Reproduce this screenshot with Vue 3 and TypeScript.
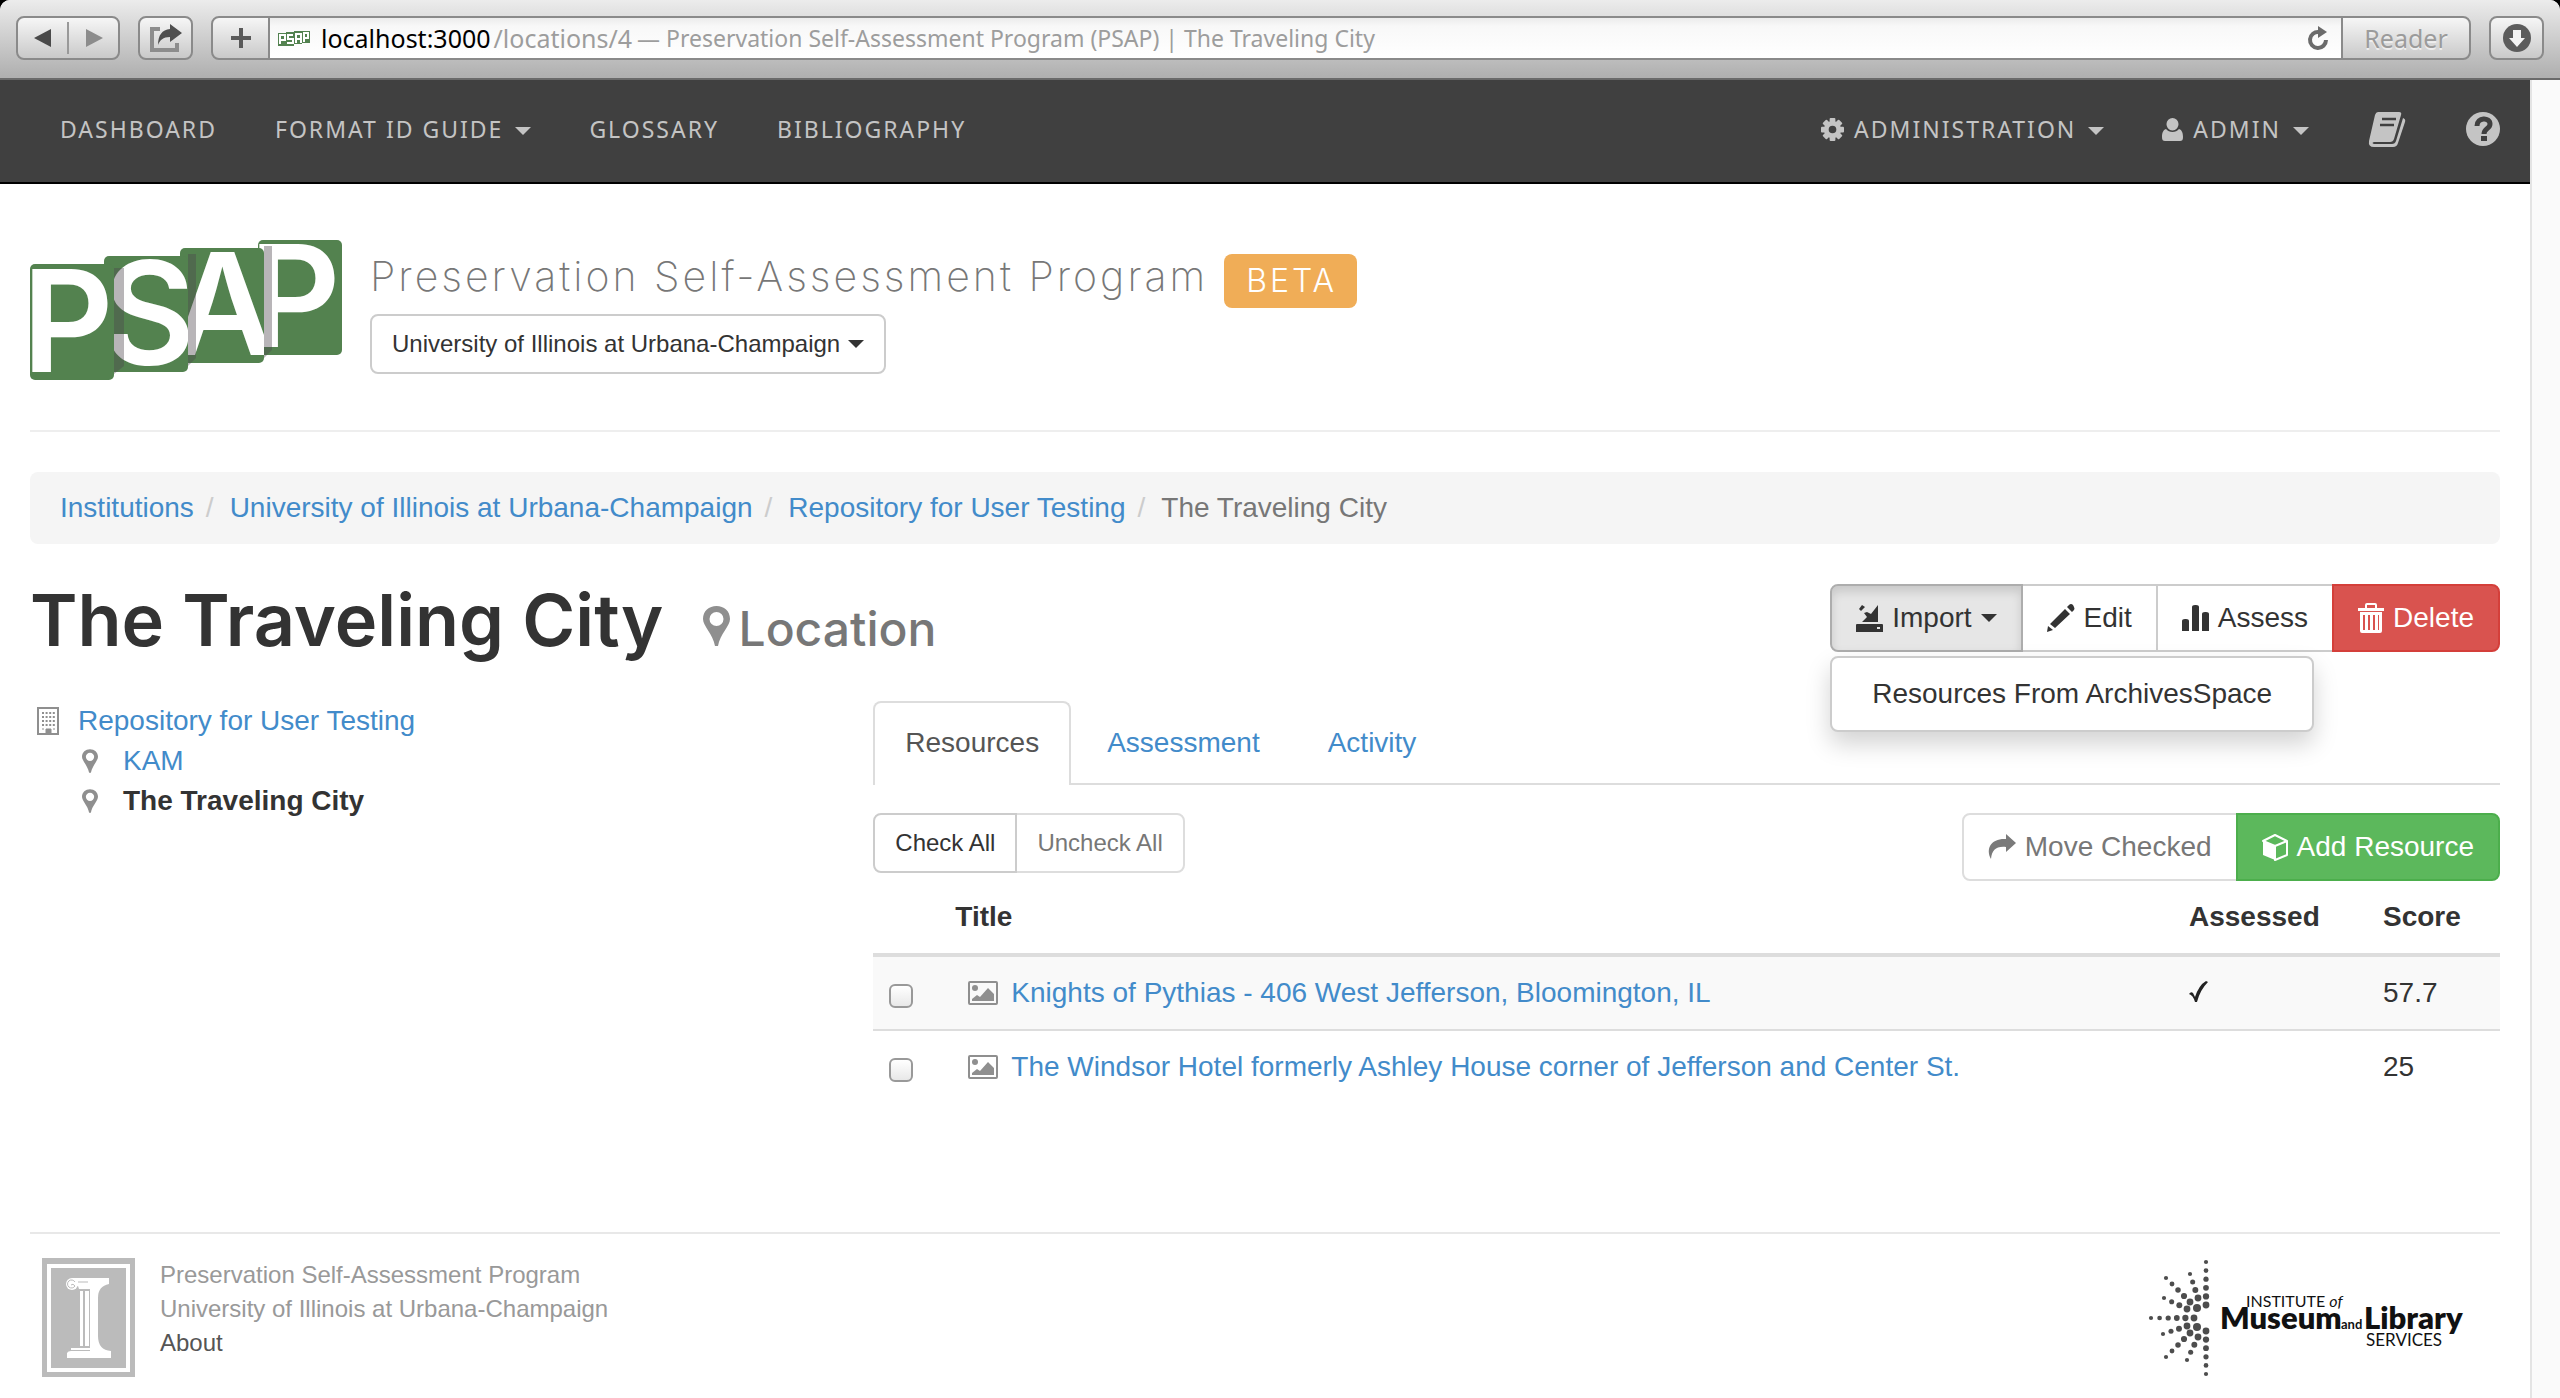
<script setup lang="ts">
interface Crumb { label: string; current?: boolean }
interface Resource { id: number; title: string; assessed: boolean; score: string }
interface Dot { x: number; y: number; r: number }

const crumbs: Crumb[] = [
  { label: 'Institutions' },
  { label: 'University of Illinois at Urbana-Champaign' },
  { label: 'Repository for User Testing' },
  { label: 'The Traveling City', current: true },
]

const resources: Resource[] = [
  { id: 1, title: 'Knights of Pythias - 406 West Jefferson, Bloomington, IL', assessed: true, score: '57.7' },
  { id: 2, title: 'The Windsor Hotel formerly Ashley House corner of Jefferson and Center St.', assessed: false, score: '25' },
]

const teeth: number[] = [0, 45, 90, 135, 180, 225, 270, 315]

// Each ray runs from its outermost dot to its innermost one.
const rays: [number, number, number, number, number][] = [
  [58, 4, 58, 47, 6],
  [42, 16, 50, 40, 4],
  [18, 20, 42, 44, 5],
  [16, 40, 39, 51, 4],
  [3, 60, 46, 60, 6],
  [15, 76, 39, 68, 4],
  [18, 99, 42, 75, 5],
  [39, 102, 50, 79, 4],
  [58, 116, 58, 73, 6],
]
const dots: Dot[] = rays.flatMap(([x1, y1, x2, y2, n]) =>
  Array.from({ length: n }, (_, i) => {
    const t = i / (n - 1)
    return { x: x1 + (x2 - x1) * t, y: y1 + (y2 - y1) * t, r: 2.1 + 1.3 * t }
  }),
).concat([{ x: 49, y: 50, r: 4 }, { x: 49, y: 69, r: 4 }])
</script>

<template>
  <div class="window">
    <header class="toolbar">
      <div class="chrome-group">
        <button class="chrome-btn nav-back" aria-label="Back">
          <svg width="18" height="18" viewBox="0 0 18 18"><path d="M17 0v18L0 9z" fill="#4a4a4a" /></svg>
        </button>
        <span class="chrome-sep"></span>
        <button class="chrome-btn nav-forward" aria-label="Forward">
          <svg width="18" height="18" viewBox="0 0 18 18"><path d="M1 0v18l17-9z" fill="#8c8c8c" /></svg>
        </button>
      </div>
      <button class="chrome-box share" aria-label="Share">
        <svg width="34" height="30" viewBox="0 0 34 30">
          <path d="M11 6H3v21h25v-7" fill="none" stroke="#8d8d8d" stroke-width="4" />
          <path d="M21 1l12 9-12 9v-5c-7 0-10 3-12 8 0-10 4-15 12-16z" fill="#4f4f4f" />
        </svg>
      </button>
      <div class="address">
        <button class="chrome-plus" aria-label="Add bookmark">
          <svg width="20" height="20" viewBox="0 0 20 20"><path d="M8 0h4v8h8v4h-8v8H8v-8H0V8h8z" fill="#5a5a5a" /></svg>
        </button>
        <div class="url">
          <svg class="favicon" width="32" height="15" viewBox="0 0 32 15">
            <path d="M0 2h8V1h8V0h16v12h-8v1h-8v2H0z" fill="#538250" />
            <path d="M2 13V4h5v5H3M15 4h-5v4h5v4h-6M18 12V3h5v9M18 8h5M26 11V2h4v5h-4" fill="none" stroke="#fff" stroke-width="2" />
          </svg>
          <span class="host">localhost:3000</span>
          <span class="path">/locations/4</span>
          <span class="page-title">— Preservation Self-Assessment Program (PSAP) | The Traveling City</span>
          <button class="reload" aria-label="Reload">
            <svg width="22" height="24" viewBox="0 0 22 24">
              <path d="M12 6a8 8 0 1 0 7 8" fill="none" stroke="#6b6b6b" stroke-width="4" />
              <path d="M11 0l9 6-9 6z" fill="#6b6b6b" />
            </svg>
          </button>
        </div>
        <button class="reader">Reader</button>
      </div>
      <button class="chrome-box downloads" aria-label="Downloads">
        <svg width="28" height="28" viewBox="0 0 28 28">
          <circle cx="14" cy="14" r="14" fill="#5c5c5c" />
          <path d="M10 6h8v8h4l-8 9-8-9h4z" fill="#f4f4f4" />
        </svg>
      </button>
    </header>

    <div class="viewport">
      <div class="page">
        <nav class="navbar">
          <a href="#">DASHBOARD</a>
          <a href="#">FORMAT ID GUIDE<i class="caret"></i></a>
          <a href="#">GLOSSARY</a>
          <a href="#">BIBLIOGRAPHY</a>
          <a href="#" class="push">
            <svg class="lead" width="23" height="23" viewBox="0 0 24 24" fill="#c4c4c4">
              <path fill-rule="evenodd" d="M12 3a9 9 0 1 0 0 18 9 9 0 0 0 0-18zm0 5a4 4 0 1 1 0 8 4 4 0 0 1 0-8z" />
              <rect v-for="t in teeth" :key="t" x="9" y="0" width="6" height="6" rx="1" :transform="`rotate(${t} 12 12)`" />
            </svg>ADMINISTRATION<i class="caret"></i>
          </a>
          <a href="#">
            <svg class="lead" width="21" height="23" viewBox="0 0 21 23" fill="#c4c4c4">
              <path d="M10.500 0a6 6 0 0 1 6 6c0 3-2.500 6.500-6 6.500S4.500 9 4.500 6a6 6 0 0 1 6-6z" />
              <path d="M4 11c3 4 10 4 13 0 3 1 4 4 4 8 0 3-1 4-3 4H3c-2 0-3-1-3-4 0-4 1-7 4-8z" />
            </svg>ADMIN<i class="caret"></i>
          </a>
          <a href="#" class="icon-link" aria-label="Glossary book">
            <svg width="37" height="36" viewBox="0 0 37 36">
              <path d="M9 1h21q3 0 2 3l-7 24q-1 3-4 3H5q-3 1 0 2h18q3 0 4-3l7-23q3 1 2 4l-7 21q-1 4-5 4H5q-6 0-5-6L6 4q1-3 3-3z" fill="#c4c4c4" />
              <path d="M13 8h14M11 14h14" stroke="#404040" stroke-width="2.500" />
            </svg>
          </a>
          <a href="#" class="icon-link" aria-label="Help">
            <svg width="34" height="34" viewBox="0 0 34 34">
              <circle cx="17" cy="17" r="17" fill="#c4c4c4" />
              <path d="M11 14c0-9 13-9 13-2 0 5-6 4-6 10" fill="none" stroke="#404040" stroke-width="5" />
              <rect x="15" y="24" width="6" height="5" fill="#404040" />
            </svg>
          </a>
        </nav>

        <div class="masthead">
          <svg class="logo" width="312" height="140" viewBox="0 0 312 140" role="img" aria-label="PSAP">
            <defs>
              <clipPath id="card-1"><rect x="0" y="24" width="84" height="116" rx="5" /></clipPath>
              <clipPath id="card-2"><rect x="74" y="16" width="84" height="116" rx="5" /></clipPath>
              <clipPath id="card-3"><rect x="150" y="8" width="84" height="115" rx="5" /></clipPath>
              <clipPath id="card-4"><rect x="228" y="0" width="84" height="115" rx="5" /></clipPath>
            </defs>
            <g clip-path="url(#card-4)">
              <rect x="228" y="0" width="84" height="115" fill="#53824f" />
              <text x="219" y="107" class="logo-letter">P</text>
            </g>
            <path d="M234 6h8v104l-8 8z" fill="#4d454d" fill-opacity=".4" />
            <g clip-path="url(#card-3)">
              <rect x="150" y="8" width="84" height="115" fill="#53824f" />
              <text x="193" y="115" text-anchor="middle" class="logo-letter">A</text>
            </g>
            <path d="M158 14h8v104l-8 8z" fill="#4d454d" fill-opacity=".4" />
            <g clip-path="url(#card-2)">
              <rect x="74" y="16" width="84" height="116" fill="#53824f" />
              <text x="119" y="124" text-anchor="middle" class="logo-letter">S</text>
            </g>
            <path d="M84 28h10v98l-10 8z" fill="#4d454d" fill-opacity=".4" />
            <g clip-path="url(#card-1)">
              <rect x="0" y="24" width="84" height="116" fill="#53824f" />
              <text x="-8" y="132" class="logo-letter">P</text>
            </g>
          </svg>
          <div class="brand">
            <div class="brand-line">
              <span class="brand-name">Preservation Self-Assessment Program</span>
              <span class="beta">BETA</span>
            </div>
            <button class="btn btn-small institution">University of Illinois at Urbana-Champaign<i class="caret"></i></button>
          </div>
        </div>

        <hr class="rule" />

        <ol class="breadcrumb">
          <li v-for="c in crumbs" :key="c.label">
            <span v-if="c.current">{{ c.label }}</span>
            <a v-else href="#">{{ c.label }}</a>
          </li>
        </ol>

        <div class="heading">
          <h1>The Traveling City
            <small><svg width="27" height="40" viewBox="0 0 27 40"><path fill-rule="evenodd" d="M13.500 0C21 0 27 5 27 13c0 7-10 15-12 27h-3C10 28 0 20 0 13 0 5 6 0 13.500 0zm0 6a7 7 0 1 0 0 14 7 7 0 0 0 0-14z" fill="#8f8f8f" /></svg>Location</small>
          </h1>
          <div class="actions">
            <div class="btn-group">
              <button class="btn active" aria-expanded="true">
                <svg width="27" height="28" viewBox="0 0 27 28" fill="#333">
                  <path d="M1 20h25q1 0 1 1v7H0v-7q0-1 1-1zM22 1v17H6l5-5-3-4 3-1 4 2zM3 5l3-4 3 2-4 4z" />
                  <rect x="21" y="23" width="3" height="2" fill="#e6e6e6" />
                </svg>Import<i class="caret"></i>
              </button>
              <button class="btn">
                <svg width="28" height="28" viewBox="0 0 28 28" fill="#333"><path d="M22 1q2-2 4 0l1 2q1 2 0 3l-2 2-5-5zM18 5l5 5L8 24l-5-4zM1 22l5 4-6 2z" /></svg>Edit
              </button>
              <button class="btn">
                <svg width="27" height="26" viewBox="0 0 27 26" fill="#333"><path d="M0 26V16q0-2 3-2h1q3 0 3 2v10zM10 26V2q0-2 3-2h1q3 0 3 2v24zM20 26V9q0-2 3-2h1q3 0 3 2v17z" /></svg>Assess
              </button>
              <button class="btn danger">
                <svg class="bin" width="26" height="30" viewBox="0 0 26 30" fill="#fff">
                  <path fill-rule="evenodd" d="M0 5h7V2q0-2 2-2h8q2 0 2 2v3h7v3H0zM9 5h8V2H9z" />
                  <path fill-rule="evenodd" d="M2 9h22v19q0 2-2 2H4q-2 0-2-2zM5 12v15h2V12zm5 0v15h2V12zm5 0v15h2V12zm5 0v15h1V12z" />
                </svg>Delete
              </button>
            </div>
            <ul class="menu"><li><a href="#">Resources From ArchivesSpace</a></li></ul>
          </div>
        </div>

        <div class="columns">
          <aside class="tree">
            <div class="node">
              <svg class="building" width="22" height="28" viewBox="0 0 22 28">
                <path d="M1 1h20v26H1z" fill="none" stroke="#8f8f8f" stroke-width="2" />
                <path d="M5 6h13M5 10h13M5 14h13M5 18h13" stroke="#8f8f8f" stroke-width="2" stroke-dasharray="2 1.600" />
                <path d="M5 22h2M16 22h2M9 22h5v5H9z" stroke="#8f8f8f" stroke-width="1" fill="#8f8f8f" />
              </svg>
              <a href="#">Repository for User Testing</a>
            </div>
            <div class="node child">
              <svg width="16" height="24" viewBox="0 0 27 40"><path fill-rule="evenodd" d="M13.500 0C21 0 27 5 27 13c0 7-10 15-12 27h-3C10 28 0 20 0 13 0 5 6 0 13.500 0zm0 6a7 7 0 1 0 0 14 7 7 0 0 0 0-14z" fill="#8f8f8f" /></svg>
              <a href="#">KAM</a>
            </div>
            <div class="node child">
              <svg width="16" height="24" viewBox="0 0 27 40"><path fill-rule="evenodd" d="M13.500 0C21 0 27 5 27 13c0 7-10 15-12 27h-3C10 28 0 20 0 13 0 5 6 0 13.500 0zm0 6a7 7 0 1 0 0 14 7 7 0 0 0 0-14z" fill="#8f8f8f" /></svg>
              <strong>The Traveling City</strong>
            </div>
          </aside>

          <main class="content">
            <div class="tabs">
              <a href="#" class="tab current">Resources</a>
              <a href="#" class="tab">Assessment</a>
              <a href="#" class="tab">Activity</a>
            </div>
            <div class="controls">
              <div class="btn-group">
                <button class="btn btn-small">Check All</button>
                <button class="btn btn-small" disabled>Uncheck All</button>
              </div>
              <div class="btn-group">
                <button class="btn" disabled>
                  <svg width="28" height="26" viewBox="0 0 28 26"><path d="M18 0l10 9-10 9v-5C8 12 4 16 3 25 -3 14 4 4 18 5z" fill="#7a7a7a" /></svg>Move Checked
                </button>
                <button class="btn success">
                  <svg width="26" height="27" viewBox="0 0 26 27">
                    <path d="M1 7l12 5v14L1 21z" fill="#fff" />
                    <path d="M13 1l12 6v14l-12 5V12L1 7zM13 12l12-5" fill="none" stroke="#fff" stroke-width="2" stroke-linejoin="round" />
                  </svg>Add Resource
                </button>
              </div>
            </div>
            <table>
              <colgroup><col class="c-check" /><col /><col class="c-assessed" /><col class="c-score" /></colgroup>
              <thead>
                <tr><th></th><th>Title</th><th>Assessed</th><th>Score</th></tr>
              </thead>
              <tbody>
                <tr v-for="r in resources" :key="r.id">
                  <td><input type="checkbox" :aria-label="r.title" /></td>
                  <td>
                    <div class="title-cell">
                      <svg width="30" height="24" viewBox="0 0 30 24">
                        <rect x="1" y="1" width="28" height="22" rx="1" fill="none" stroke="#8f8f8f" stroke-width="2" />
                        <circle cx="7" cy="7" r="3" fill="#8f8f8f" />
                        <path d="M4 20v-2l5-4 3 2 8-9 6 6v7z" fill="#8f8f8f" />
                      </svg>
                      <a href="#">{{ r.title }}</a>
                    </div>
                  </td>
                  <td>
                    <svg v-if="r.assessed" width="19" height="22" viewBox="0 0 19 22" aria-label="Yes"><path d="M0 13q2-3 4-1l2 4Q10 4 17 0l2 1Q11 9 8 21H6Q4 14 0 13z" fill="#222" /></svg>
                  </td>
                  <td>{{ r.score }}</td>
                </tr>
              </tbody>
            </table>
          </main>
        </div>

        <footer class="footer">
          <svg width="93" height="119" viewBox="0 0 93 119" role="img" aria-label="University of Illinois">
            <rect width="93" height="119" fill="#bbb" />
            <rect x="7" y="8" width="79" height="104" fill="none" stroke="#fff" stroke-width="4" />
            <path d="M30 20H67v6q-11 2-11 14v38q0 14 13 15v7H25v-5q1-2 4-2h19V31H37l-1-3h-6z" fill="#fff" />
            <path d="M38 33h3v55h-3zM43 33h4v55h-4zM29 90h19v2H29z" fill="#fff" />
            <circle cx="30" cy="26" r="6" fill="#fff" />
            <path d="M36 24h10M33 24a4 4 0 1 0 0 4q-2-3-4-1" stroke="#bbb" stroke-width="1" fill="none" />
          </svg>
          <div class="footer-text">
            <span>Preservation Self-Assessment Program</span>
            <span>University of Illinois at Urbana-Champaign</span>
            <a href="#">About</a>
          </div>
          <svg class="imls" width="316" height="119" viewBox="0 0 316 119" role="img" aria-label="Institute of Museum and Library Services">
            <circle v-for="(d, i) in dots" :key="i" :cx="d.x" :cy="d.y" :r="d.r" fill="#4d4d4d" />
            <text x="98" y="49" font-size="16">INSTITUTE <tspan font-style="italic">of</tspan></text>
            <text x="72" y="71" font-size="31" font-weight="800">Museum</text>
            <text x="193" y="71" font-size="13" font-weight="700">and</text>
            <text x="216" y="71" font-size="31" font-weight="800">Library</text>
            <text x="218" y="88" font-size="17">SERVICES</text>
          </svg>
        </footer>
      </div>
      <div class="scrollbar"></div>
    </div>
  </div>
</template>

<style>
html, body { margin: 0; background: #000; }
</style>

<style scoped>
* { box-sizing: border-box; }
.window {
  min-height: 100vh; display: flex; flex-direction: column; background: #fff;
  font-family: "Liberation Sans", Arial, sans-serif; font-size: 28px; line-height: 40px; color: #333;
  border-radius: 10px 10px 0 0; overflow: hidden;
}
a { color: #428bca; text-decoration: none; }
button { font: inherit; color: inherit; margin: 0; padding: 0; border: 0; background: none; }
svg { flex: none; display: block; overflow: visible; }
.caret { display: inline-block; border: 8px solid transparent; border-top-color: currentColor; border-bottom: 0; }

.toolbar {
  height: 80px; display: flex; align-items: flex-start; padding: 16px 16px 0; gap: 18px;
  background: linear-gradient(#ececec, #dcdcdc 20px, #b0b0b0 76px); border-bottom: 2px solid #6a6a6a;
}
.chrome-group, .chrome-box, .chrome-plus, .reader {
  height: 44px; border: 2px solid #8a8a8a; border-radius: 8px; background: linear-gradient(#f6f6f6, #c9c9c9);
}
.chrome-group { width: 104px; display: flex; align-items: center; }
.chrome-btn { flex: 1; display: flex; justify-content: center; }
.chrome-sep { width: 2px; height: 32px; background: #999; }
.chrome-box { width: 55px; display: flex; align-items: center; justify-content: center; }
.address { flex: 1; display: flex; }
.chrome-plus { width: 59px; display: flex; align-items: center; justify-content: center; border-radius: 8px 0 0 8px; }
.url {
  flex: 1; height: 44px; display: flex; align-items: center; padding: 0 12px 0 8px; white-space: nowrap;
  border: solid #8a8a8a; border-width: 2px 0; background: linear-gradient(#ececec, #f8f8f8 8px, #fff);
  font-family: "Noto Sans", sans-serif; font-size: 25px; color: #9d9d9d;
}
.host { margin-left: 11px; color: #000; }
.path { margin-left: 3px; }
.page-title { margin-left: 5px; font-size: 23px; }
.reload { margin-left: auto; }
.reader {
  width: 130px; border-radius: 0 8px 8px 0; color: #9b9b9b; text-shadow: 0 2px 0 #eee;
  font-family: "Noto Sans", sans-serif; font-size: 25px; line-height: 40px;
}

.viewport { flex: 1; display: flex; }
.page { flex: 1; min-width: 0; }
.scrollbar { width: 30px; background: #fafafa; border-left: 2px solid #e4e4e4; }

.navbar {
  height: 104px; display: flex; align-items: center; gap: 58px; padding: 0 30px 4px 60px;
  background: #404040; border-bottom: 2px solid #000;
}
.navbar a {
  display: flex; align-items: center; color: #c4c4c4; white-space: nowrap;
  font-family: "Noto Sans", sans-serif; font-size: 23px; letter-spacing: 2px;
}
.navbar .caret { margin: 4px 0 0 12px; }
.navbar .lead { margin-right: 10px; }
.navbar .push { margin-left: auto; }
.navbar .icon-link { margin-left: 2px; }

.masthead { display: flex; gap: 28px; padding: 56px 30px 0; }
.logo-letter { font: 600 142px Inter, sans-serif; fill: #fff; }
.brand { padding-top: 6px; }
.brand-line { display: flex; align-items: flex-start; gap: 16px; height: 68px; }
.brand-name { font: 200 41px/60px Inter, sans-serif; letter-spacing: 3px; color: #777; white-space: nowrap; }
.beta {
  height: 54px; margin-top: 8px; padding: 0 20px 0 22px; border-radius: 8px; background: #f0ad57; color: #fff;
  font: 300 32px/54px Inter, sans-serif; letter-spacing: 3px;
}
.btn {
  display: flex; align-items: center; gap: 9px; height: 68px; padding: 0 24px; border: 2px solid #ccc;
  border-radius: 8px; background: #fff; color: #333; line-height: 40px; white-space: nowrap;
}
.btn-small { height: 60px; padding: 0 20px; gap: 8px; font-size: 24px; line-height: 36px; }
.rule { margin: 50px 30px 40px; border: 0; border-top: 2px solid #eee; }
.breadcrumb {
  display: flex; margin: 0 30px; padding: 16px 30px; list-style: none; border-radius: 8px; background: #f5f5f5;
}
.breadcrumb li + li::before { content: "/"; padding: 0 16px 0 12px; color: #ccc; }
.breadcrumb span { color: #777; }

.heading { display: flex; align-items: flex-start; justify-content: space-between; height: 120px; padding: 40px 30px 0; }
h1 { margin: 0; font: 600 72px/72px Inter, sans-serif; display: flex; align-items: baseline; white-space: nowrap; }
small { display: flex; align-items: baseline; gap: 8px; margin-left: 40px; font-size: 48px; font-weight: 500; color: #777; }
.actions { position: relative; }
.btn-group { display: flex; }
.btn-group .btn + .btn { margin-left: -2px; border-top-left-radius: 0; border-bottom-left-radius: 0; }
.btn-group .btn:not(:last-child) { border-top-right-radius: 0; border-bottom-right-radius: 0; }
.btn-group .btn:not(:disabled) { position: relative; }
.btn:disabled { color: #777; border-color: #ddd; }
.btn.active { background: #e6e6e6; border-color: #adadad; box-shadow: inset 0 6px 10px rgba(0, 0, 0, .125); z-index: 1; }
.btn.danger { background: #d9534f; border-color: #d43f3a; color: #fff; }
.btn.success { background: #5cb85c; border-color: #4cae4c; color: #fff; }
.menu {
  position: absolute; top: 72px; left: 0; z-index: 2; margin: 0; padding: 16px 40px; list-style: none; white-space: nowrap;
  background: #fff; border: 2px solid #ccc; border-radius: 8px; box-shadow: 0 12px 24px rgba(0, 0, 0, .175);
}
.menu a { color: #333; }

.columns { display: flex; padding-top: 37px; }
.tree { width: calc(100% / 3); padding: 0 30px; }
.node { display: flex; align-items: center; gap: 19px; padding-left: 7px; }
.child { padding-left: 52px; gap: 25px; }
.content { flex: 1; padding: 0 30px; }
.tabs { display: flex; gap: 4px; border-bottom: 2px solid #ddd; }
.tab { height: 82px; padding: 20px 30px; border: 2px solid transparent; border-bottom: 0; }
.tab.current { height: 84px; margin-bottom: -2px; background: #fff; border-color: #ddd; border-radius: 8px 8px 0 0; color: #555; }
.controls { display: flex; justify-content: space-between; align-items: flex-start; padding-top: 28px; }
table { width: 100%; table-layout: fixed; border-spacing: 0; }
.c-check { width: 66px; }
.c-assessed { width: 194px; }
.c-score { width: 133px; }
th, td { padding: 16px; text-align: left; vertical-align: top; }
th { border-bottom: 4px solid #ddd; }
td { height: 72px; }
tbody tr:nth-child(odd) { background: #f9f9f9; }
tbody tr + tr td { border-top: 2px solid #ddd; height: 74px; }
input[type="checkbox"] {
  appearance: none; display: block; width: 24px; height: 24px; margin: 11px 0 0; border: 2px solid #999;
  border-radius: 6px; background: linear-gradient(#fff, #e8e8e8);
}
.title-cell { display: flex; align-items: center; gap: 13px; padding-left: 13px; }
td > svg { margin-top: 8px; }

.footer { display: flex; margin: 129px 30px 0; padding: 24px 12px 16px; border-top: 2px solid #e8e8e8; }
.footer-text { display: flex; flex-direction: column; margin-left: 25px; font-size: 24px; line-height: 34px; color: #999; }
.footer-text a { color: #555; }
.imls { margin-left: auto; margin-right: 24px; font-family: Lato, sans-serif; fill: #111; }
</style>
